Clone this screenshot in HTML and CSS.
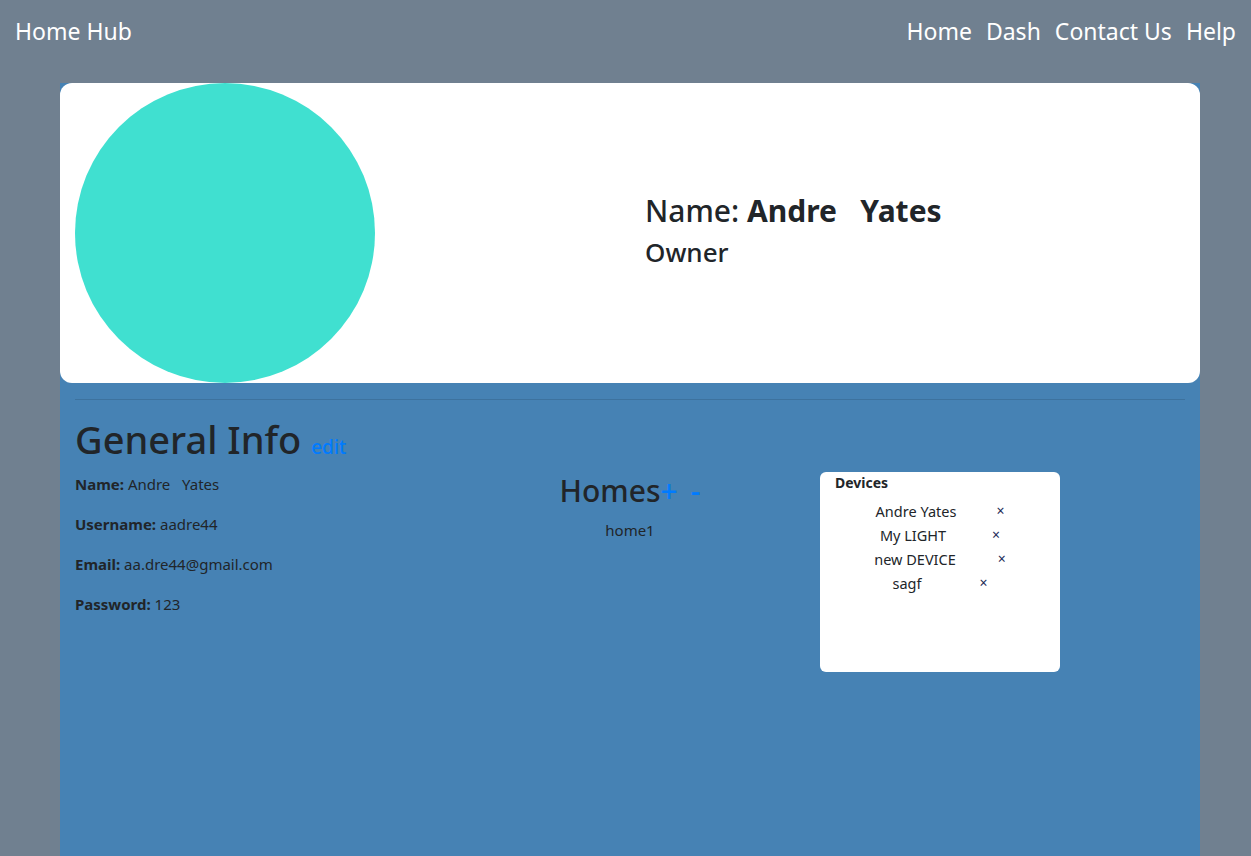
FILE: index.html
```html
<!DOCTYPE html>
<html>
<head>
<meta charset="utf-8">
<link rel="stylesheet" href="styles.css">
</head>
<body>
<nav class="nav">
  <a class="brand" href="#">Home Hub</a>
  <div class="links">
    <a href="#">Home</a>
    <a href="#">Dash</a>
    <a href="#">Contact Us</a>
    <a href="#">Help</a>
  </div>
</nav>
<main class="container">
  <section class="card">
    <div class="half"><div class="avatar"></div></div>
    <div class="half ident">
      <h2 class="name">Name: <b>Andre&nbsp;&nbsp;&nbsp;Yates</b></h2>
      <h3 class="role">Owner</h3>
    </div>
  </section>
  <hr class="rule">
  <h1 class="title">General Info <a class="edit" href="#">edit</a></h1>
  <div class="cols">
    <div class="col info">
      <p><b>Name:</b> Andre&nbsp;&nbsp;&nbsp;Yates</p>
      <p><b>Username:</b> aadre44</p>
      <p><b>Email:</b> aa.dre44@gmail.com</p>
      <p><b>Password:</b> 123</p>
    </div>
    <div class="col homes">
      <h2 class="homes-title">Homes<a class="act" href="#">+</a><a class="act minus" href="#">-</a></h2>
      <div class="home">home1</div>
    </div>
    <div class="col">
      <div class="devices">
        <div class="dev-title">Devices</div>
        <ul class="dev-list">
          <li class="g40"><span>Andre Yates</span><span class="x">×</span></li>
          <li class="g46"><span>My LIGHT</span><span class="x">×</span></li>
          <li class="g42"><span>new DEVICE</span><span class="x">×</span></li>
          <li class="g58"><span>sagf</span><span class="x">×</span></li>
        </ul>
      </div>
    </div>
  </div>
</main>
</body>
</html>
```
FILE: styles.css
```css
* { box-sizing: border-box; }
html, body { margin: 0; padding: 0; }
body {
  background: #708090;
  font-family: "Noto Sans", "Open Sans", sans-serif;
  color: #212529;
  font-size: 16px;
  line-height: 1.5;
  min-height: 856px;
}
a { text-decoration: none; }
.nav {
  display: flex;
  justify-content: space-between;
  align-items: center;
  height: 62px;
  padding: 0 15px;
}
.nav a { color: #fff; font-size: 23px; }
.links { display: flex; gap: 14px; }
.container {
  width: 1140px;
  margin: 21px 0 0 60px;
  background: #4682b4;
  min-height: 773px;
  padding: 0 15px;
}
.card {
  display: flex;
  background: #fff;
  border-radius: 12px;
  height: 300px;
  margin: 0 -15px;
}
.half { width: 50%; padding: 0 15px; }
.ident { display: flex; flex-direction: column; justify-content: center; padding-bottom: 4px; }
.avatar { width: 300px; height: 300px; border-radius: 50%; background: #40e0d0; }
.name { font-size: 30px; font-weight: 500; margin: 0 0 8px; line-height: 1.2; }
.name b { font-weight: 700; }
.role { font-size: 26px; font-weight: 500; margin: 0; line-height: 1.2; }
.rule { border: 0; border-top: 1px solid rgba(0,0,0,0.12); margin: 16px 0 17px; }
.title { font-size: 38px; font-weight: 500; margin: 0 0 9px; line-height: 1.2; }
.edit { color: #007bff; font-size: 19px; }
.cols { display: flex; margin: 0 -15px; }
.col { width: 380px; }
.info { padding: 0 15px; font-size: 15px; }
.info p { margin: 0 0 16px; line-height: 24px; }
.homes { text-align: center; }
.homes-title { font-size: 30px; font-weight: 500; margin: 0 0 8px; line-height: 38px; }
.act { color: #007bff; }
.minus { margin-left: 13px; }
.home { font-size: 15px; line-height: 24px; }
.devices {
  width: 240px;
  height: 200px;
  background: #fff;
  border-radius: 6px;
  padding: 0 15px;
}
.dev-title { font-size: 14px; font-weight: 700; line-height: 22px; }
.dev-list { list-style: none; margin: 5px 0 0; padding: 0; font-size: 14.5px; }
.dev-list li { display: flex; justify-content: center; gap: 40px; line-height: 24px; }
.dev-list .g46 { gap: 46px; }
.dev-list .g42 { gap: 42px; }
.dev-list .g58 { gap: 58px; }
.x { color: #1c2a56; font-size: 14px; }
```
